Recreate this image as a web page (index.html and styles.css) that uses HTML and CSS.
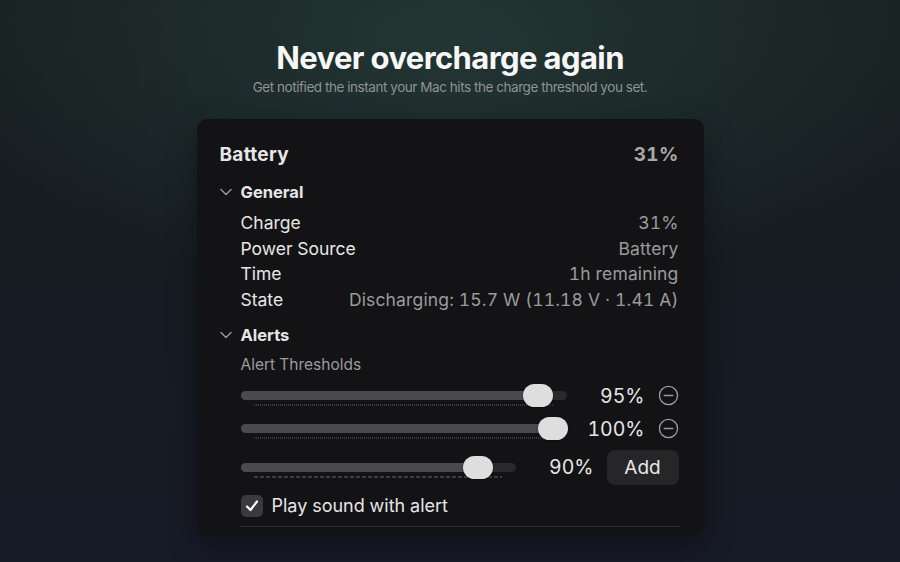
FILE: index.html
```html
<!DOCTYPE html>
<html>
<head>
    <title>Battery Alerts</title>
    <link rel="stylesheet" href="styles.css">
</head>
<body>
    <div class="hero">
        <h1>Never overcharge again</h1>
        <p>Get notified the instant your Mac hits the charge threshold you set.</p>
    </div>

    <div class="card">
        <div class="card-head">
            <span>Battery</span>
            <span class="muted">31%</span>
        </div>

        <div class="group-head">
            <svg class="chevron" viewBox="0 0 12 8"><path d="M1 1.5 L6 6.5 L11 1.5"/></svg>
            <span>General</span>
        </div>
        <div class="rows">
            <div class="row"><span>Charge</span><span class="muted">31%</span></div>
            <div class="row"><span>Power Source</span><span class="muted">Battery</span></div>
            <div class="row"><span>Time</span><span class="muted">1h remaining</span></div>
            <div class="row"><span>State</span><span class="muted">Discharging: 15.7 W (11.18 V · 1.41 A)</span></div>
        </div>

        <div class="group-head alerts">
            <svg class="chevron" viewBox="0 0 12 8"><path d="M1 1.5 L6 6.5 L11 1.5"/></svg>
            <span>Alerts</span>
        </div>
        <div class="alerts-body">
            <div class="sub-label">Alert Thresholds</div>

            <div class="threshold first">
                <div class="slider">
                    <div class="track"><div class="fill" style="width: 297px"></div></div>
                    <div class="ticks"></div>
                    <div class="thumb" style="left: 282px"></div>
                </div>
                <span class="value">95%</span>
                <svg class="remove" viewBox="0 0 22 22"><circle cx="11" cy="11" r="9.5"/><path d="M6.5 11 H15.5"/></svg>
            </div>

            <div class="threshold">
                <div class="slider">
                    <div class="track"><div class="fill" style="width: 312px"></div></div>
                    <div class="ticks"></div>
                    <div class="thumb" style="left: 297px"></div>
                </div>
                <span class="value">100%</span>
                <svg class="remove" viewBox="0 0 22 22"><circle cx="11" cy="11" r="9.5"/><path d="M6.5 11 H15.5"/></svg>
            </div>

            <div class="threshold new">
                <div class="slider">
                    <div class="track"><div class="fill" style="width: 237px"></div></div>
                    <div class="ticks dashed"></div>
                    <div class="thumb" style="left: 222px"></div>
                </div>
                <span class="value">90%</span>
                <button class="add">Add</button>
            </div>

            <label class="check">
                <span class="box">
                    <svg viewBox="0 0 16 16"><path d="M3 8.5 L6.5 12 L13 3.5"/></svg>
                </span>
                Play sound with alert
            </label>
            <div class="divider"></div>
        </div>
    </div>
</body>
</html>
```

FILE: styles.css
```css
body {
    margin: 0;
    height: 562px;
    overflow: hidden;
    font-family: Inter, "Noto Sans", sans-serif;
    color: #e6e6e6;
    background:
        radial-gradient(ellipse 520px 260px at 50% 40px, rgba(36, 56, 54, 0.9), rgba(36, 56, 54, 0) 100%),
        linear-gradient(#18211f 0%, #161c22 45%, #171b28 100%);
}
.hero {
    text-align: center;
    padding-top: 38px;
}
.hero h1 {
    margin: 0;
    font-size: 31px;
    line-height: 40px;
    font-weight: 700;
    letter-spacing: -0.6px;
    color: #f7f7f7;
}
.hero p {
    margin: 0;
    font-size: 13.5px;
    line-height: 18px;
    letter-spacing: -0.45px;
    color: #8e9393;
}
.card {
    width: 507px;
    height: 417px;
    box-sizing: border-box;
    margin: 23px auto 0;
    padding: 24px 25px 0 23px;
    background: #131315;
    border-radius: 10px;
    box-shadow: 0 10px 30px rgba(0, 0, 0, 0.35);
    font-variant-numeric: tabular-nums;
}
.muted {
    color: #9b9b9d;
}
.card-head {
    display: flex;
    justify-content: space-between;
    font-size: 19px;
    line-height: 24px;
    font-weight: 700;
    letter-spacing: 0.3px;
}
.card-head .muted {
    color: #a8a8aa;
}
.group-head {
    display: flex;
    align-items: center;
    gap: 9px;
    margin-top: 13px;
    font-size: 16.5px;
    line-height: 24px;
    font-weight: 700;
}
.group-head.alerts {
    margin-top: 11px;
}
.chevron {
    width: 12px;
    height: 8px;
    fill: none;
    stroke: #9b9b9d;
    stroke-width: 1.4;
    stroke-linecap: round;
    stroke-linejoin: round;
}
.rows {
    margin-top: 6px;
    padding-left: 21px;
}
.row {
    display: flex;
    justify-content: space-between;
    font-size: 17.5px;
    line-height: 25.5px;
}
.row .muted {
    letter-spacing: 0.15px;
}
.alerts-body {
    padding-left: 21px;
}
.sub-label {
    margin-top: 8px;
    font-size: 15.5px;
    line-height: 20px;
    color: #9b9b9d;
}
.threshold {
    display: flex;
    align-items: center;
    height: 33px;
}
.threshold.first {
    margin-top: 4px;
}
.threshold.new {
    height: 38px;
    margin-top: 3px;
}
.slider {
    position: relative;
    flex: 1;
    height: 23px;
}
.track {
    position: absolute;
    left: 0;
    right: 0;
    top: 7px;
    height: 9px;
    border-radius: 5px;
    background: #2a2a2c;
    overflow: hidden;
}
.fill {
    height: 100%;
    background: #4a4a4c;
}
.ticks {
    position: absolute;
    left: 13px;
    right: 14px;
    top: 20px;
    height: 2px;
    background: repeating-linear-gradient(90deg, #3c3c3e 0 1px, transparent 1px 2px);
}
.ticks.dashed {
    background: repeating-linear-gradient(90deg, #3c3c3e 0 4px, transparent 4px 6px);
}
.thumb {
    position: absolute;
    top: 0;
    width: 30px;
    height: 23px;
    border-radius: 12px;
    background: #dedede;
    box-shadow: 0 1px 2px rgba(0, 0, 0, 0.4);
}
.value {
    width: 65px;
    margin: 0 13px;
    text-align: right;
    font-size: 19.5px;
    color: #e6e6e6;
}
.remove {
    width: 21px;
    height: 21px;
    fill: none;
    stroke: #9b9b9d;
    stroke-width: 1.4;
    stroke-linecap: round;
}
.add {
    width: 72px;
    height: 35px;
    border: none;
    border-radius: 8px;
    background: #262628;
    color: #e6e6e6;
    font-family: inherit;
    font-size: 19px;
    cursor: pointer;
}
.check {
    display: flex;
    align-items: center;
    gap: 9px;
    margin-top: 8px;
    font-size: 18px;
    line-height: 24px;
}
.box {
    display: flex;
    align-items: center;
    justify-content: center;
    width: 22px;
    height: 22px;
    border-radius: 5px;
    background: #3a3a3c;
}
.box svg {
    width: 16px;
    height: 16px;
    fill: none;
    stroke: #ffffff;
    stroke-width: 2.2;
    stroke-linecap: round;
    stroke-linejoin: round;
}
.divider {
    margin-top: 8px;
    height: 1px;
    background: #2e2e30;
}
```
